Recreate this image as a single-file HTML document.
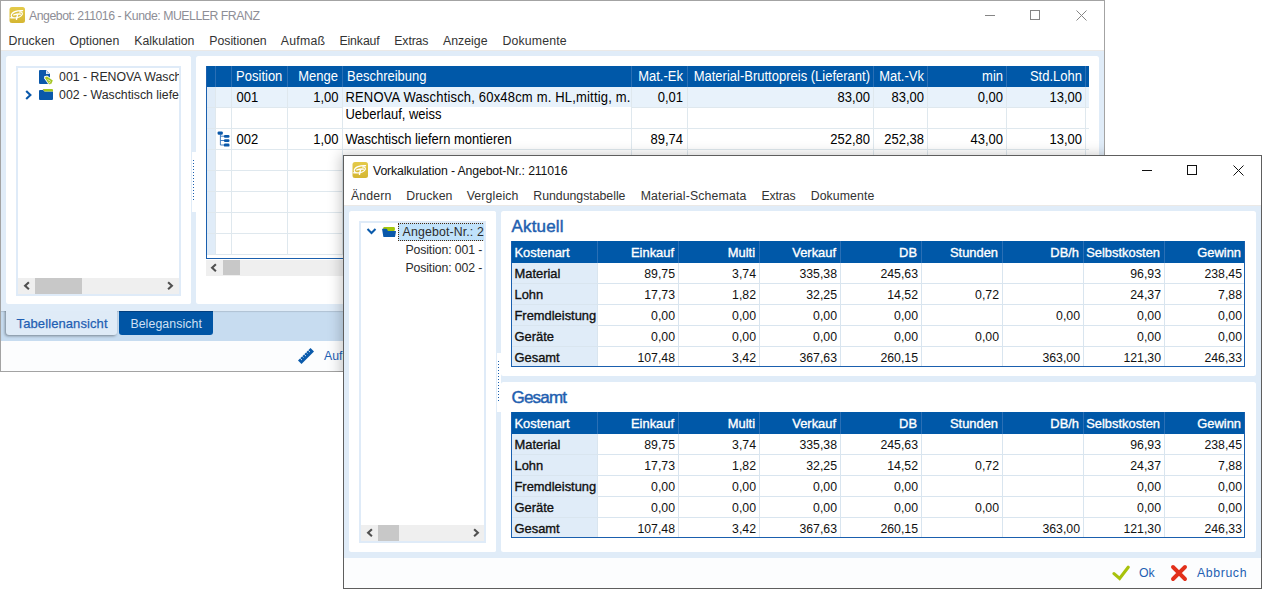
<!DOCTYPE html><html><head><meta charset="utf-8"><style>
html,body{margin:0;padding:0;}
body{width:1262px;height:589px;position:relative;overflow:hidden;background:#fff;font-family:"Liberation Sans",sans-serif;}
.t{position:absolute;white-space:nowrap;}
.b{position:absolute;box-sizing:border-box;}
svg{position:absolute;}
</style></head><body>
<div class="b" style="left:0px;top:0px;width:1105px;height:372px;border:1px solid #a3a3a3;background:#fff;"></div>
<svg style="left:9.4px;top:6.8px" width="16" height="16" viewBox="0 0 16 16"><defs><linearGradient id="gi" x1="0" y1="0" x2="0" y2="1"><stop offset="0" stop-color="#e4ca4a"/><stop offset="1" stop-color="#d5b632"/></linearGradient></defs><rect x="0.5" y="0" width="15.5" height="16" rx="2.5" fill="url(#gi)"/><path d="M13.6 3.6C8 3.3 2.6 5 2.2 8.3C1.9 10.5 5 11.3 8 10.7C11.5 10 13.8 8 13.3 6.1C13 5.2 12 4.9 10.8 5.1M1.2 10.8C2.5 11 3.8 11 5 10.9" stroke="#fff" stroke-width="1.15" fill="none" stroke-linecap="round"/><path d="M4.9 7.9C7 7.2 9.4 7 11.4 7.1M8.6 7.4L7.5 12.3" stroke="#fff" stroke-width="1.45" fill="none" stroke-linecap="round"/></svg>
<div class="t" style="left:29px;top:9.37px;font-size:12.3px;line-height:14.14px;color:#8e8e96;letter-spacing:-0.478px;">Angebot: 211016 - Kunde: MUELLER FRANZ</div>
<div class="b" style="left:985px;top:15px;width:10px;height:1px;background:#858585;"></div>
<div class="b" style="left:1030px;top:10px;width:10px;height:10px;border:1px solid #858585;"></div>
<svg style="left:1076px;top:10px" width="11" height="11" viewBox="0 0 11 11"><path d="M0.5 0.5L10.5 10.5M10.5 0.5L0.5 10.5" stroke="#858585" stroke-width="1"/></svg>
<div class="t" style="left:8.6px;top:33.97px;font-size:12.3px;line-height:14.14px;color:#333;letter-spacing:0.048px;">Drucken</div>
<div class="t" style="left:69.4px;top:33.97px;font-size:12.3px;line-height:14.14px;color:#333;letter-spacing:-0.005px;">Optionen</div>
<div class="t" style="left:134.3px;top:33.97px;font-size:12.3px;line-height:14.14px;color:#333;letter-spacing:-0.010px;">Kalkulation</div>
<div class="t" style="left:209.2px;top:33.97px;font-size:12.3px;line-height:14.14px;color:#333;letter-spacing:0.003px;">Positionen</div>
<div class="t" style="left:280.7px;top:33.97px;font-size:12.3px;line-height:14.14px;color:#333;letter-spacing:0.264px;">Aufmaß</div>
<div class="t" style="left:339.4px;top:33.97px;font-size:12.3px;line-height:14.14px;color:#333;letter-spacing:-0.108px;">Einkauf</div>
<div class="t" style="left:394.3px;top:33.97px;font-size:12.3px;line-height:14.14px;color:#333;letter-spacing:-0.135px;">Extras</div>
<div class="t" style="left:443px;top:33.97px;font-size:12.3px;line-height:14.14px;color:#333;letter-spacing:0.005px;">Anzeige</div>
<div class="t" style="left:502.5px;top:33.97px;font-size:12.3px;line-height:14.14px;color:#333;letter-spacing:0.147px;">Dokumente</div>
<div class="b" style="left:1px;top:50px;width:1103px;height:261px;background:#e0ecf8;"></div>
<div class="b" style="left:1px;top:50px;width:1103px;height:1px;background:#ebe9e7;"></div>
<div class="b" style="left:6px;top:56px;width:185px;height:248px;background:#fff;border-radius:2.5px;"></div>
<div class="b" style="left:16px;top:66px;width:165px;height:230px;border:2px solid #dfebf8;background:#fff;"></div>
<svg style="left:39px;top:70px" width="15" height="15" viewBox="0 0 15 15"><path d="M1 0H7L11 4V13.5Q11 14 10.5 14H1Q0 14 0 13V1Q0 0 1 0Z" fill="#0a58aa"/><path d="M7 0.3L10.7 4H7.5Q7 4 7 3.5Z" fill="#fff"/><path d="M7.6 0.9L10 3.4H7.6Z" fill="#a9c8ea"/><path d="M5.2 6.2L8.2 5.6L14.6 10.2L12.8 14.6L9.8 15L5.2 8.4Z" fill="#fff"/><path d="M6.3 6.9L8 6.6L13.8 10.6L12.2 13.9L10 14.2L6.3 8.3Z" fill="#a4c520"/><path d="M8.5 9.5L11.8 11.4M9.6 12.2L11.4 13.1" stroke="#fff" stroke-width="0.7"/></svg>
<div class="t" style="left:59.1px;top:70.07px;font-size:12.3px;line-height:14.14px;color:#2b2b2b;clip-path:inset(0 0 0 0);">001 - RENOVA Waschtisch liefern</div>
<svg style="left:25px;top:90px" width="8" height="10" viewBox="0 0 8 10"><path d="M1.2 0.9L5.4 5L1.2 9.1" stroke="#0a58aa" stroke-width="2.1" fill="none"/></svg>
<svg style="left:39px;top:89px" width="14" height="11" viewBox="0 0 14 11"><path d="M1 1H4.2L5.6 2.6H14V10Q14 11 13 11H1Q0 11 0 10V2Q0 1 1 1Z" fill="#0a58aa"/><path d="M3.6 0H13Q14 0 14 1V2.6H5.4Z" fill="#a4c520"/></svg>
<div class="t" style="left:59.1px;top:87.97px;font-size:12.3px;line-height:14.14px;color:#2b2b2b;">002 - Waschtisch liefern montieren</div>
<div class="b" style="left:179px;top:66px;width:2px;height:230px;background:#dfebf8;"></div>
<div class="b" style="left:181px;top:56px;width:10px;height:248px;background:#fff;border-radius:0 2.5px 2.5px 0;"></div>
<div class="b" style="left:191px;top:51px;width:5px;height:260px;background:#e0ecf8;"></div>
<div class="b" style="left:18px;top:278px;width:161px;height:16px;background:#efefef;"></div>
<div class="b" style="left:35px;top:278px;width:47px;height:16px;background:#c8c8c8;"></div>
<svg style="left:22px;top:281px" width="9" height="10" viewBox="0 0 9 10"><path d="M6.9 1.2L3.1 4.7L6.9 8.2" stroke="#505050" stroke-width="2.1" fill="none"/></svg>
<svg style="left:166px;top:281px" width="9" height="10" viewBox="0 0 9 10"><path d="M2.1 1.2L5.9 4.7L2.1 8.2" stroke="#505050" stroke-width="2.1" fill="none"/></svg>
<div class="b" style="left:192px;top:152px;width:4px;height:60px;background:#fff;"></div>
<div class="b" style="left:193px;top:160px;width:1px;height:41px;background:repeating-linear-gradient(to bottom,#1a5fae 0,#1a5fae 1px,transparent 1px,transparent 3px);"></div>
<div class="b" style="left:196px;top:56px;width:903px;height:248px;background:#fff;border-radius:2.5px;"></div>
<div class="b" style="left:206px;top:66px;width:883px;height:21px;background:#0058a8;"></div>
<div class="b" style="left:215px;top:66px;width:1px;height:21px;background:#2a6fb5;"></div>
<div class="b" style="left:231px;top:66px;width:1px;height:21px;background:#2a6fb5;"></div>
<div class="b" style="left:287px;top:66px;width:1px;height:21px;background:#2a6fb5;"></div>
<div class="b" style="left:342px;top:66px;width:1px;height:21px;background:#2a6fb5;"></div>
<div class="b" style="left:631px;top:66px;width:1px;height:21px;background:#2a6fb5;"></div>
<div class="b" style="left:687px;top:66px;width:1px;height:21px;background:#2a6fb5;"></div>
<div class="b" style="left:873px;top:66px;width:1px;height:21px;background:#2a6fb5;"></div>
<div class="b" style="left:927px;top:66px;width:1px;height:21px;background:#2a6fb5;"></div>
<div class="b" style="left:1006px;top:66px;width:1px;height:21px;background:#2a6fb5;"></div>
<div class="b" style="left:1085px;top:66px;width:1px;height:21px;background:#2a6fb5;"></div>
<div class="b" style="left:206px;top:87px;width:9px;height:167px;background:#e0ecf8;"></div>
<div class="b" style="left:215px;top:87px;width:874px;height:20px;background:#e8f2fb;"></div>
<div class="b" style="left:206px;top:107px;width:883px;height:1px;background:#dfe8ee;"></div>
<div class="b" style="left:206px;top:128px;width:883px;height:1px;background:#dfe8ee;"></div>
<div class="b" style="left:206px;top:149px;width:883px;height:1px;background:#dfe8ee;"></div>
<div class="b" style="left:206px;top:170px;width:883px;height:1px;background:#dfe8ee;"></div>
<div class="b" style="left:206px;top:191px;width:883px;height:1px;background:#dfe8ee;"></div>
<div class="b" style="left:206px;top:212px;width:883px;height:1px;background:#dfe8ee;"></div>
<div class="b" style="left:206px;top:233px;width:883px;height:1px;background:#dfe8ee;"></div>
<div class="b" style="left:206px;top:254px;width:883px;height:1px;background:#dfe8ee;"></div>
<div class="b" style="left:343px;top:107px;width:288px;height:1px;background:#fff;"></div>
<div class="b" style="left:343px;top:87px;width:288px;height:20px;background:#e8f2fb;"></div>
<div class="b" style="left:215px;top:87px;width:1px;height:167px;background:#dfe8ee;"></div>
<div class="b" style="left:231px;top:87px;width:1px;height:167px;background:#dfe8ee;"></div>
<div class="b" style="left:287px;top:87px;width:1px;height:167px;background:#dfe8ee;"></div>
<div class="b" style="left:342px;top:87px;width:1px;height:167px;background:#dfe8ee;"></div>
<div class="b" style="left:631px;top:87px;width:1px;height:167px;background:#dfe8ee;"></div>
<div class="b" style="left:687px;top:87px;width:1px;height:167px;background:#dfe8ee;"></div>
<div class="b" style="left:873px;top:87px;width:1px;height:167px;background:#dfe8ee;"></div>
<div class="b" style="left:927px;top:87px;width:1px;height:167px;background:#dfe8ee;"></div>
<div class="b" style="left:1006px;top:87px;width:1px;height:167px;background:#dfe8ee;"></div>
<div class="b" style="left:1085px;top:87px;width:1px;height:167px;background:#dfe8ee;"></div>
<div class="b" style="left:206px;top:66px;width:1px;height:193px;background:#1a5fae;"></div>
<div class="b" style="left:206px;top:258px;width:883px;height:1px;background:#1a5fae;"></div>
<div class="t" style="left:236.1px;top:68.72px;font-size:13px;line-height:14.95px;color:#ffffff;transform:scaleY(1.1);transform-origin:0 2.67px;">Position</div>
<div class="t" style="right:924px;top:68.72px;font-size:13px;line-height:14.95px;color:#ffffff;transform:scaleY(1.1);transform-origin:0 2.67px;">Menge</div>
<div class="t" style="left:347px;top:68.72px;font-size:13px;line-height:14.95px;color:#ffffff;transform:scaleY(1.1);transform-origin:0 2.67px;">Beschreibung</div>
<div class="t" style="right:579px;top:68.72px;font-size:13px;line-height:14.95px;color:#ffffff;transform:scaleY(1.1);transform-origin:0 2.67px;">Mat.-Ek</div>
<div class="t" style="right:392px;top:68.72px;font-size:13px;line-height:14.95px;color:#ffffff;transform:scaleY(1.1);transform-origin:0 2.67px;">Material-Bruttopreis (Lieferant)</div>
<div class="t" style="right:338px;top:68.72px;font-size:13px;line-height:14.95px;color:#ffffff;transform:scaleY(1.1);transform-origin:0 2.67px;">Mat.-Vk</div>
<div class="t" style="right:259px;top:68.72px;font-size:13px;line-height:14.95px;color:#ffffff;transform:scaleY(1.1);transform-origin:0 2.67px;">min</div>
<div class="t" style="right:180px;top:68.72px;font-size:13px;line-height:14.95px;color:#ffffff;transform:scaleY(1.1);transform-origin:0 2.67px;">Std.Lohn</div>
<div class="t" style="left:236.5px;top:90.42px;font-size:13px;line-height:14.95px;color:#000;transform:scaleY(1.1);transform-origin:0 2.67px;">001</div>
<div class="t" style="right:923.5px;top:90.42px;font-size:13px;line-height:14.95px;color:#000;transform:scaleY(1.1);transform-origin:0 2.67px;">1,00</div>
<div class="t" style="left:345.4px;top:90.42px;font-size:13px;line-height:14.95px;color:#000;letter-spacing:0.181px;transform:scaleY(1.1);transform-origin:0 2.67px;">RENOVA Waschtisch, 60x48cm m. HL,mittig, m.</div>
<div class="t" style="left:345.4px;top:106.62px;font-size:13px;line-height:14.95px;color:#000;transform:scaleY(1.1);transform-origin:0 2.67px;">Ueberlauf, weiss</div>
<div class="t" style="right:579px;top:90.42px;font-size:13px;line-height:14.95px;color:#000;transform:scaleY(1.1);transform-origin:0 2.67px;">0,01</div>
<div class="t" style="right:392px;top:90.42px;font-size:13px;line-height:14.95px;color:#000;transform:scaleY(1.1);transform-origin:0 2.67px;">83,00</div>
<div class="t" style="right:338px;top:90.42px;font-size:13px;line-height:14.95px;color:#000;transform:scaleY(1.1);transform-origin:0 2.67px;">83,00</div>
<div class="t" style="right:259px;top:90.42px;font-size:13px;line-height:14.95px;color:#000;transform:scaleY(1.1);transform-origin:0 2.67px;">0,00</div>
<div class="t" style="right:180px;top:90.42px;font-size:13px;line-height:14.95px;color:#000;transform:scaleY(1.1);transform-origin:0 2.67px;">13,00</div>
<div class="t" style="left:236.5px;top:132.42px;font-size:13px;line-height:14.95px;color:#000;transform:scaleY(1.1);transform-origin:0 2.67px;">002</div>
<div class="t" style="right:923.5px;top:132.42px;font-size:13px;line-height:14.95px;color:#000;transform:scaleY(1.1);transform-origin:0 2.67px;">1,00</div>
<div class="t" style="left:345.4px;top:132.42px;font-size:13px;line-height:14.95px;color:#000;transform:scaleY(1.1);transform-origin:0 2.67px;">Waschtisch liefern montieren</div>
<div class="t" style="right:579px;top:132.42px;font-size:13px;line-height:14.95px;color:#000;transform:scaleY(1.1);transform-origin:0 2.67px;">89,74</div>
<div class="t" style="right:392px;top:132.42px;font-size:13px;line-height:14.95px;color:#000;transform:scaleY(1.1);transform-origin:0 2.67px;">252,80</div>
<div class="t" style="right:338px;top:132.42px;font-size:13px;line-height:14.95px;color:#000;transform:scaleY(1.1);transform-origin:0 2.67px;">252,38</div>
<div class="t" style="right:259px;top:132.42px;font-size:13px;line-height:14.95px;color:#000;transform:scaleY(1.1);transform-origin:0 2.67px;">43,00</div>
<div class="t" style="right:180px;top:132.42px;font-size:13px;line-height:14.95px;color:#000;transform:scaleY(1.1);transform-origin:0 2.67px;">13,00</div>
<svg style="left:217px;top:131px" width="14" height="17" viewBox="0 0 14 17"><path d="M3.4 3.5V14M3.4 5.2H7M3.4 9.5H7M3.4 14H7" stroke="#2f6fb8" stroke-width="0.9" fill="none"/><rect x="0.6" y="0.4" width="5.2" height="3.3" rx="1.2" fill="#0a58aa"/><rect x="6.9" y="3.9" width="5.6" height="2.8" rx="1.2" fill="#0a58aa"/><rect x="6.9" y="8.2" width="5.6" height="2.8" rx="1.2" fill="#0a58aa"/><rect x="6.9" y="12.6" width="5.6" height="3" rx="1.2" fill="#0a58aa"/></svg>
<div class="b" style="left:206px;top:260px;width:200px;height:16px;background:#efefef;"></div>
<div class="b" style="left:223px;top:260px;width:17px;height:15px;background:#c8c8c8;"></div>
<svg style="left:209px;top:262.5px" width="9" height="10" viewBox="0 0 9 10"><path d="M6.9 1.2L3.1 4.7L6.9 8.2" stroke="#505050" stroke-width="2.1" fill="none"/></svg>
<div class="b" style="left:1px;top:311px;width:1103px;height:30px;overflow:hidden;background:#c7dcf0;box-shadow:inset 0 1px 1px rgba(0,0,0,0.12);">
<div class="b" style="left:5px;top:-3px;width:111px;height:27px;background:#dfebf7;border-radius:0 0 3px 3px;box-shadow:-1px 1px 3px rgba(0,0,0,0.4);"></div>
</div>
<div class="t" style="left:16.6px;top:316.82px;font-size:13px;line-height:14.95px;color:#1f5fb3;letter-spacing:0.096px;-webkit-text-stroke:0.25px #1f5fb3;">Tabellenansicht</div>
<div class="b" style="left:119px;top:311px;width:94px;height:24px;background:#0055a5;border-radius:0 0 3px 3px;box-shadow:inset 0 1px 0 #003f80;"></div>
<div class="t" style="left:130.4px;top:317.17px;font-size:12.3px;line-height:14.14px;color:#cfe0f4;letter-spacing:0.094px;">Belegansicht</div>
<div class="b" style="left:1px;top:341px;width:1103px;height:30px;background:#fcfdfe;"></div>
<svg style="left:297px;top:347px" width="18" height="18" viewBox="0 0 18 18"><path d="M1 13.5L13.5 1L17 4.5L4.5 17Z" fill="#0a5aab"/><path d="M3.2 11.3l1.8 1.8M5.2 9.3l1.2 1.2M7.2 7.3l1.8 1.8M9.2 5.3l1.2 1.2M11.2 3.3l1.8 1.8" stroke="#fff" stroke-width="0.8"/></svg>
<div class="t" style="left:324px;top:349.17px;font-size:12.3px;line-height:14.14px;color:#1f5fb3;">Aufmaß</div>
<div class="b" style="left:0;top:0;width:1105px;height:372px;overflow:hidden;">
<div class="b" style="left:343px;top:155px;width:919px;height:434px;box-shadow:-3px -1px 12px rgba(0,0,0,0.2);"></div>
</div>
<div class="b" style="left:343px;top:155px;width:919px;height:434px;border:1px solid #5e5e5e;background:#fff;"></div>
<svg style="left:352px;top:162px" width="16" height="16" viewBox="0 0 16 16"><rect x="0.5" y="0" width="15.5" height="16" rx="2.5" fill="url(#gi)"/><path d="M13.6 3.6C8 3.3 2.6 5 2.2 8.3C1.9 10.5 5 11.3 8 10.7C11.5 10 13.8 8 13.3 6.1C13 5.2 12 4.9 10.8 5.1M1.2 10.8C2.5 11 3.8 11 5 10.9" stroke="#fff" stroke-width="1.15" fill="none" stroke-linecap="round"/><path d="M4.9 7.9C7 7.2 9.4 7 11.4 7.1M8.6 7.4L7.5 12.3" stroke="#fff" stroke-width="1.45" fill="none" stroke-linecap="round"/></svg>
<div class="t" style="left:373px;top:163.67px;font-size:12.3px;line-height:14.14px;color:#111;letter-spacing:-0.138px;">Vorkalkulation - Angebot-Nr.: 211016</div>
<div class="b" style="left:1142px;top:170px;width:10px;height:1px;background:#111;"></div>
<div class="b" style="left:1187px;top:165px;width:10px;height:10px;border:1px solid #111;"></div>
<svg style="left:1233px;top:165px" width="11" height="11" viewBox="0 0 11 11"><path d="M0.5 0.5L10.5 10.5M10.5 0.5L0.5 10.5" stroke="#111" stroke-width="1"/></svg>
<div class="t" style="left:350.9px;top:188.67px;font-size:12.3px;line-height:14.14px;color:#333;letter-spacing:0.166px;">Ändern</div>
<div class="t" style="left:406.3px;top:188.67px;font-size:12.3px;line-height:14.14px;color:#333;letter-spacing:0.048px;">Drucken</div>
<div class="t" style="left:466.7px;top:188.67px;font-size:12.3px;line-height:14.14px;color:#333;letter-spacing:0.147px;">Vergleich</div>
<div class="t" style="left:533.3px;top:188.67px;font-size:12.3px;line-height:14.14px;color:#333;letter-spacing:-0.011px;">Rundungstabelle</div>
<div class="t" style="left:640.7px;top:188.67px;font-size:12.3px;line-height:14.14px;color:#333;letter-spacing:0.158px;">Material-Schemata</div>
<div class="t" style="left:761.4px;top:188.67px;font-size:12.3px;line-height:14.14px;color:#333;letter-spacing:-0.115px;">Extras</div>
<div class="t" style="left:810.7px;top:188.67px;font-size:12.3px;line-height:14.14px;color:#333;letter-spacing:0.097px;">Dokumente</div>
<div class="b" style="left:344px;top:205px;width:917px;height:353px;background:#e0ecf8;"></div>
<div class="b" style="left:344px;top:205px;width:917px;height:1px;background:#ebe9e7;"></div>
<div class="b" style="left:349px;top:211px;width:147px;height:341px;background:#fff;border-radius:2.5px;"></div>
<div class="b" style="left:359px;top:221px;width:127px;height:322px;border:2px solid #dfebf8;background:#fff;"></div>
<svg style="left:366px;top:227px" width="11" height="9" viewBox="0 0 11 9"><path d="M1.5 2L5.5 6L9.5 2" stroke="#0a5aab" stroke-width="2" fill="none"/></svg>
<svg style="left:382px;top:226px" width="15" height="12" viewBox="0 0 15 12"><rect x="1.2" y="1" width="11.7" height="4" rx="1.2" fill="#a4c80a"/><path d="M0.6 2.7H4.2Q4.8 2.7 5.1 3.3L5.9 5H13.6Q14.1 5 14 5.5L13.1 10.4Q12.9 11 12.3 11H2.1Q1.5 11 1.3 10.4L0.1 3.3Q0 2.7 0.6 2.7Z" fill="#0a58aa"/></svg>
<div class="b" style="left:398px;top:223px;width:87px;height:18px;background:#c0e2fb;border:1px dotted #4a2a10;"></div>
<div class="t" style="left:402.6px;top:224.67px;font-size:12.3px;line-height:14.14px;color:#2b2b2b;letter-spacing:0.150px;">Angebot-Nr.: 2</div>
<div class="t" style="left:405.4px;top:242.87px;font-size:12.3px;line-height:14.14px;color:#2b2b2b;letter-spacing:-0.120px;">Position: 001 - RENOVA</div>
<div class="t" style="left:405.4px;top:261.27px;font-size:12.3px;line-height:14.14px;color:#2b2b2b;letter-spacing:-0.120px;">Position: 002 - Waschtisch</div>
<div class="b" style="left:484px;top:221px;width:2px;height:322px;background:#dfebf8;"></div>
<div class="b" style="left:486px;top:211px;width:10px;height:341px;background:#fff;border-radius:0 2.5px 2.5px 0;"></div>
<div class="b" style="left:496px;top:206px;width:5px;height:352px;background:#e0ecf8;"></div>
<div class="b" style="left:361px;top:525px;width:123px;height:16px;background:#efefef;"></div>
<div class="b" style="left:378px;top:525px;width:21px;height:16px;background:#c8c8c8;"></div>
<svg style="left:365px;top:528px" width="9" height="10" viewBox="0 0 9 10"><path d="M6.9 1.2L3.1 4.7L6.9 8.2" stroke="#505050" stroke-width="2.1" fill="none"/></svg>
<svg style="left:472px;top:528px" width="9" height="10" viewBox="0 0 9 10"><path d="M2.1 1.2L5.9 4.7L2.1 8.2" stroke="#505050" stroke-width="2.1" fill="none"/></svg>
<div class="b" style="left:497px;top:353px;width:4px;height:59px;background:#fff;"></div>
<div class="b" style="left:498px;top:361px;width:1px;height:41px;background:repeating-linear-gradient(to bottom,#1a5fae 0,#1a5fae 1px,transparent 1px,transparent 3px);"></div>
<div class="b" style="left:501px;top:211px;width:755px;height:165px;background:#fff;border-radius:2.5px;"></div>
<div class="t" style="left:511.5px;top:217.33px;font-size:17px;line-height:19.55px;color:#1f5fb0;letter-spacing:0.161px;-webkit-text-stroke:0.45px #1f5fb0;">Aktuell</div>
<div class="b" style="left:511px;top:241px;width:734px;height:22px;background:#0058a8;"></div>
<div class="b" style="left:597px;top:241px;width:1px;height:22px;background:#2a6fb5;"></div>
<div class="b" style="left:678px;top:241px;width:1px;height:22px;background:#2a6fb5;"></div>
<div class="b" style="left:759px;top:241px;width:1px;height:22px;background:#2a6fb5;"></div>
<div class="b" style="left:840px;top:241px;width:1px;height:22px;background:#2a6fb5;"></div>
<div class="b" style="left:921px;top:241px;width:1px;height:22px;background:#2a6fb5;"></div>
<div class="b" style="left:1002px;top:241px;width:1px;height:22px;background:#2a6fb5;"></div>
<div class="b" style="left:1083px;top:241px;width:1px;height:22px;background:#2a6fb5;"></div>
<div class="b" style="left:1164px;top:241px;width:1px;height:22px;background:#2a6fb5;"></div>
<div class="t" style="left:514.5px;top:245.62px;font-size:12.9px;line-height:14.83px;color:#fff;-webkit-text-stroke:0.35px #fff;">Kostenart</div>
<div class="t" style="right:588px;top:245.62px;font-size:12.9px;line-height:14.83px;color:#fff;-webkit-text-stroke:0.35px #fff;">Einkauf</div>
<div class="t" style="right:507px;top:245.62px;font-size:12.9px;line-height:14.83px;color:#fff;-webkit-text-stroke:0.35px #fff;">Multi</div>
<div class="t" style="right:426px;top:245.62px;font-size:12.9px;line-height:14.83px;color:#fff;-webkit-text-stroke:0.35px #fff;">Verkauf</div>
<div class="t" style="right:345px;top:245.62px;font-size:12.9px;line-height:14.83px;color:#fff;-webkit-text-stroke:0.35px #fff;">DB</div>
<div class="t" style="right:264px;top:245.62px;font-size:12.9px;line-height:14.83px;color:#fff;-webkit-text-stroke:0.35px #fff;">Stunden</div>
<div class="t" style="right:183px;top:245.62px;font-size:12.9px;line-height:14.83px;color:#fff;-webkit-text-stroke:0.35px #fff;">DB/h</div>
<div class="t" style="right:102px;top:245.62px;font-size:12.9px;line-height:14.83px;color:#fff;-webkit-text-stroke:0.35px #fff;">Selbstkosten</div>
<div class="t" style="right:21px;top:245.62px;font-size:12.9px;line-height:14.83px;color:#fff;-webkit-text-stroke:0.35px #fff;">Gewinn</div>
<div class="b" style="left:511px;top:263px;width:86px;height:103px;background:#e0ecf8;"></div>
<div class="b" style="left:511px;top:283px;width:734px;height:1px;background:#d9e5ef;"></div>
<div class="b" style="left:511px;top:304px;width:734px;height:1px;background:#d9e5ef;"></div>
<div class="b" style="left:511px;top:325px;width:734px;height:1px;background:#d9e5ef;"></div>
<div class="b" style="left:511px;top:346px;width:734px;height:1px;background:#d9e5ef;"></div>
<div class="b" style="left:597px;top:263px;width:1px;height:103px;background:#d9e5ef;"></div>
<div class="b" style="left:678px;top:263px;width:1px;height:103px;background:#d9e5ef;"></div>
<div class="b" style="left:759px;top:263px;width:1px;height:103px;background:#d9e5ef;"></div>
<div class="b" style="left:840px;top:263px;width:1px;height:103px;background:#d9e5ef;"></div>
<div class="b" style="left:921px;top:263px;width:1px;height:103px;background:#d9e5ef;"></div>
<div class="b" style="left:1002px;top:263px;width:1px;height:103px;background:#d9e5ef;"></div>
<div class="b" style="left:1083px;top:263px;width:1px;height:103px;background:#d9e5ef;"></div>
<div class="b" style="left:1164px;top:263px;width:1px;height:103px;background:#d9e5ef;"></div>
<div class="b" style="left:511px;top:241px;width:1px;height:126px;background:#1a5fae;"></div>
<div class="b" style="left:1244px;top:241px;width:1px;height:126px;background:#1a5fae;"></div>
<div class="b" style="left:511px;top:366px;width:734px;height:1px;background:#1a5fae;"></div>
<div class="t" style="left:514.5px;top:266.62px;font-size:12.9px;line-height:14.83px;color:#111;-webkit-text-stroke:0.35px #111;">Material</div>
<div class="t" style="right:587px;top:267.17px;font-size:12.3px;line-height:14.14px;color:#111;">89,75</div>
<div class="t" style="right:506px;top:267.17px;font-size:12.3px;line-height:14.14px;color:#111;">3,74</div>
<div class="t" style="right:425px;top:267.17px;font-size:12.3px;line-height:14.14px;color:#111;">335,38</div>
<div class="t" style="right:344px;top:267.17px;font-size:12.3px;line-height:14.14px;color:#111;">245,63</div>
<div class="t" style="right:101px;top:267.17px;font-size:12.3px;line-height:14.14px;color:#111;">96,93</div>
<div class="t" style="right:20px;top:267.17px;font-size:12.3px;line-height:14.14px;color:#111;">238,45</div>
<div class="t" style="left:514.5px;top:287.62px;font-size:12.9px;line-height:14.83px;color:#111;-webkit-text-stroke:0.35px #111;">Lohn</div>
<div class="t" style="right:587px;top:288.17px;font-size:12.3px;line-height:14.14px;color:#111;">17,73</div>
<div class="t" style="right:506px;top:288.17px;font-size:12.3px;line-height:14.14px;color:#111;">1,82</div>
<div class="t" style="right:425px;top:288.17px;font-size:12.3px;line-height:14.14px;color:#111;">32,25</div>
<div class="t" style="right:344px;top:288.17px;font-size:12.3px;line-height:14.14px;color:#111;">14,52</div>
<div class="t" style="right:263px;top:288.17px;font-size:12.3px;line-height:14.14px;color:#111;">0,72</div>
<div class="t" style="right:101px;top:288.17px;font-size:12.3px;line-height:14.14px;color:#111;">24,37</div>
<div class="t" style="right:20px;top:288.17px;font-size:12.3px;line-height:14.14px;color:#111;">7,88</div>
<div class="t" style="left:514.5px;top:308.62px;font-size:12.9px;line-height:14.83px;color:#111;-webkit-text-stroke:0.35px #111;">Fremdleistung</div>
<div class="t" style="right:587px;top:309.17px;font-size:12.3px;line-height:14.14px;color:#111;">0,00</div>
<div class="t" style="right:506px;top:309.17px;font-size:12.3px;line-height:14.14px;color:#111;">0,00</div>
<div class="t" style="right:425px;top:309.17px;font-size:12.3px;line-height:14.14px;color:#111;">0,00</div>
<div class="t" style="right:344px;top:309.17px;font-size:12.3px;line-height:14.14px;color:#111;">0,00</div>
<div class="t" style="right:182px;top:309.17px;font-size:12.3px;line-height:14.14px;color:#111;">0,00</div>
<div class="t" style="right:101px;top:309.17px;font-size:12.3px;line-height:14.14px;color:#111;">0,00</div>
<div class="t" style="right:20px;top:309.17px;font-size:12.3px;line-height:14.14px;color:#111;">0,00</div>
<div class="t" style="left:514.5px;top:329.62px;font-size:12.9px;line-height:14.83px;color:#111;-webkit-text-stroke:0.35px #111;">Geräte</div>
<div class="t" style="right:587px;top:330.17px;font-size:12.3px;line-height:14.14px;color:#111;">0,00</div>
<div class="t" style="right:506px;top:330.17px;font-size:12.3px;line-height:14.14px;color:#111;">0,00</div>
<div class="t" style="right:425px;top:330.17px;font-size:12.3px;line-height:14.14px;color:#111;">0,00</div>
<div class="t" style="right:344px;top:330.17px;font-size:12.3px;line-height:14.14px;color:#111;">0,00</div>
<div class="t" style="right:263px;top:330.17px;font-size:12.3px;line-height:14.14px;color:#111;">0,00</div>
<div class="t" style="right:101px;top:330.17px;font-size:12.3px;line-height:14.14px;color:#111;">0,00</div>
<div class="t" style="right:20px;top:330.17px;font-size:12.3px;line-height:14.14px;color:#111;">0,00</div>
<div class="t" style="left:514.5px;top:350.62px;font-size:12.9px;line-height:14.83px;color:#111;-webkit-text-stroke:0.35px #111;">Gesamt</div>
<div class="t" style="right:587px;top:351.17px;font-size:12.3px;line-height:14.14px;color:#111;">107,48</div>
<div class="t" style="right:506px;top:351.17px;font-size:12.3px;line-height:14.14px;color:#111;">3,42</div>
<div class="t" style="right:425px;top:351.17px;font-size:12.3px;line-height:14.14px;color:#111;">367,63</div>
<div class="t" style="right:344px;top:351.17px;font-size:12.3px;line-height:14.14px;color:#111;">260,15</div>
<div class="t" style="right:182px;top:351.17px;font-size:12.3px;line-height:14.14px;color:#111;">363,00</div>
<div class="t" style="right:101px;top:351.17px;font-size:12.3px;line-height:14.14px;color:#111;">121,30</div>
<div class="t" style="right:20px;top:351.17px;font-size:12.3px;line-height:14.14px;color:#111;">246,33</div>
<div class="b" style="left:501px;top:382px;width:755px;height:170px;background:#fff;border-radius:2.5px;"></div>
<div class="t" style="left:511.5px;top:388.33px;font-size:17px;line-height:19.55px;color:#1f5fb0;letter-spacing:-0.800px;-webkit-text-stroke:0.45px #1f5fb0;">Gesamt</div>
<div class="b" style="left:511px;top:412px;width:734px;height:22px;background:#0058a8;"></div>
<div class="b" style="left:597px;top:412px;width:1px;height:22px;background:#2a6fb5;"></div>
<div class="b" style="left:678px;top:412px;width:1px;height:22px;background:#2a6fb5;"></div>
<div class="b" style="left:759px;top:412px;width:1px;height:22px;background:#2a6fb5;"></div>
<div class="b" style="left:840px;top:412px;width:1px;height:22px;background:#2a6fb5;"></div>
<div class="b" style="left:921px;top:412px;width:1px;height:22px;background:#2a6fb5;"></div>
<div class="b" style="left:1002px;top:412px;width:1px;height:22px;background:#2a6fb5;"></div>
<div class="b" style="left:1083px;top:412px;width:1px;height:22px;background:#2a6fb5;"></div>
<div class="b" style="left:1164px;top:412px;width:1px;height:22px;background:#2a6fb5;"></div>
<div class="t" style="left:514.5px;top:416.62px;font-size:12.9px;line-height:14.83px;color:#fff;-webkit-text-stroke:0.35px #fff;">Kostenart</div>
<div class="t" style="right:588px;top:416.62px;font-size:12.9px;line-height:14.83px;color:#fff;-webkit-text-stroke:0.35px #fff;">Einkauf</div>
<div class="t" style="right:507px;top:416.62px;font-size:12.9px;line-height:14.83px;color:#fff;-webkit-text-stroke:0.35px #fff;">Multi</div>
<div class="t" style="right:426px;top:416.62px;font-size:12.9px;line-height:14.83px;color:#fff;-webkit-text-stroke:0.35px #fff;">Verkauf</div>
<div class="t" style="right:345px;top:416.62px;font-size:12.9px;line-height:14.83px;color:#fff;-webkit-text-stroke:0.35px #fff;">DB</div>
<div class="t" style="right:264px;top:416.62px;font-size:12.9px;line-height:14.83px;color:#fff;-webkit-text-stroke:0.35px #fff;">Stunden</div>
<div class="t" style="right:183px;top:416.62px;font-size:12.9px;line-height:14.83px;color:#fff;-webkit-text-stroke:0.35px #fff;">DB/h</div>
<div class="t" style="right:102px;top:416.62px;font-size:12.9px;line-height:14.83px;color:#fff;-webkit-text-stroke:0.35px #fff;">Selbstkosten</div>
<div class="t" style="right:21px;top:416.62px;font-size:12.9px;line-height:14.83px;color:#fff;-webkit-text-stroke:0.35px #fff;">Gewinn</div>
<div class="b" style="left:511px;top:434px;width:86px;height:103px;background:#e0ecf8;"></div>
<div class="b" style="left:511px;top:454px;width:734px;height:1px;background:#d9e5ef;"></div>
<div class="b" style="left:511px;top:475px;width:734px;height:1px;background:#d9e5ef;"></div>
<div class="b" style="left:511px;top:496px;width:734px;height:1px;background:#d9e5ef;"></div>
<div class="b" style="left:511px;top:517px;width:734px;height:1px;background:#d9e5ef;"></div>
<div class="b" style="left:597px;top:434px;width:1px;height:103px;background:#d9e5ef;"></div>
<div class="b" style="left:678px;top:434px;width:1px;height:103px;background:#d9e5ef;"></div>
<div class="b" style="left:759px;top:434px;width:1px;height:103px;background:#d9e5ef;"></div>
<div class="b" style="left:840px;top:434px;width:1px;height:103px;background:#d9e5ef;"></div>
<div class="b" style="left:921px;top:434px;width:1px;height:103px;background:#d9e5ef;"></div>
<div class="b" style="left:1002px;top:434px;width:1px;height:103px;background:#d9e5ef;"></div>
<div class="b" style="left:1083px;top:434px;width:1px;height:103px;background:#d9e5ef;"></div>
<div class="b" style="left:1164px;top:434px;width:1px;height:103px;background:#d9e5ef;"></div>
<div class="b" style="left:511px;top:412px;width:1px;height:126px;background:#1a5fae;"></div>
<div class="b" style="left:1244px;top:412px;width:1px;height:126px;background:#1a5fae;"></div>
<div class="b" style="left:511px;top:537px;width:734px;height:1px;background:#1a5fae;"></div>
<div class="t" style="left:514.5px;top:437.62px;font-size:12.9px;line-height:14.83px;color:#111;-webkit-text-stroke:0.35px #111;">Material</div>
<div class="t" style="right:587px;top:438.17px;font-size:12.3px;line-height:14.14px;color:#111;">89,75</div>
<div class="t" style="right:506px;top:438.17px;font-size:12.3px;line-height:14.14px;color:#111;">3,74</div>
<div class="t" style="right:425px;top:438.17px;font-size:12.3px;line-height:14.14px;color:#111;">335,38</div>
<div class="t" style="right:344px;top:438.17px;font-size:12.3px;line-height:14.14px;color:#111;">245,63</div>
<div class="t" style="right:101px;top:438.17px;font-size:12.3px;line-height:14.14px;color:#111;">96,93</div>
<div class="t" style="right:20px;top:438.17px;font-size:12.3px;line-height:14.14px;color:#111;">238,45</div>
<div class="t" style="left:514.5px;top:458.62px;font-size:12.9px;line-height:14.83px;color:#111;-webkit-text-stroke:0.35px #111;">Lohn</div>
<div class="t" style="right:587px;top:459.17px;font-size:12.3px;line-height:14.14px;color:#111;">17,73</div>
<div class="t" style="right:506px;top:459.17px;font-size:12.3px;line-height:14.14px;color:#111;">1,82</div>
<div class="t" style="right:425px;top:459.17px;font-size:12.3px;line-height:14.14px;color:#111;">32,25</div>
<div class="t" style="right:344px;top:459.17px;font-size:12.3px;line-height:14.14px;color:#111;">14,52</div>
<div class="t" style="right:263px;top:459.17px;font-size:12.3px;line-height:14.14px;color:#111;">0,72</div>
<div class="t" style="right:101px;top:459.17px;font-size:12.3px;line-height:14.14px;color:#111;">24,37</div>
<div class="t" style="right:20px;top:459.17px;font-size:12.3px;line-height:14.14px;color:#111;">7,88</div>
<div class="t" style="left:514.5px;top:479.62px;font-size:12.9px;line-height:14.83px;color:#111;-webkit-text-stroke:0.35px #111;">Fremdleistung</div>
<div class="t" style="right:587px;top:480.17px;font-size:12.3px;line-height:14.14px;color:#111;">0,00</div>
<div class="t" style="right:506px;top:480.17px;font-size:12.3px;line-height:14.14px;color:#111;">0,00</div>
<div class="t" style="right:425px;top:480.17px;font-size:12.3px;line-height:14.14px;color:#111;">0,00</div>
<div class="t" style="right:344px;top:480.17px;font-size:12.3px;line-height:14.14px;color:#111;">0,00</div>
<div class="t" style="right:101px;top:480.17px;font-size:12.3px;line-height:14.14px;color:#111;">0,00</div>
<div class="t" style="right:20px;top:480.17px;font-size:12.3px;line-height:14.14px;color:#111;">0,00</div>
<div class="t" style="left:514.5px;top:500.62px;font-size:12.9px;line-height:14.83px;color:#111;-webkit-text-stroke:0.35px #111;">Geräte</div>
<div class="t" style="right:587px;top:501.17px;font-size:12.3px;line-height:14.14px;color:#111;">0,00</div>
<div class="t" style="right:506px;top:501.17px;font-size:12.3px;line-height:14.14px;color:#111;">0,00</div>
<div class="t" style="right:425px;top:501.17px;font-size:12.3px;line-height:14.14px;color:#111;">0,00</div>
<div class="t" style="right:344px;top:501.17px;font-size:12.3px;line-height:14.14px;color:#111;">0,00</div>
<div class="t" style="right:263px;top:501.17px;font-size:12.3px;line-height:14.14px;color:#111;">0,00</div>
<div class="t" style="right:101px;top:501.17px;font-size:12.3px;line-height:14.14px;color:#111;">0,00</div>
<div class="t" style="right:20px;top:501.17px;font-size:12.3px;line-height:14.14px;color:#111;">0,00</div>
<div class="t" style="left:514.5px;top:521.62px;font-size:12.9px;line-height:14.83px;color:#111;-webkit-text-stroke:0.35px #111;">Gesamt</div>
<div class="t" style="right:587px;top:522.17px;font-size:12.3px;line-height:14.14px;color:#111;">107,48</div>
<div class="t" style="right:506px;top:522.17px;font-size:12.3px;line-height:14.14px;color:#111;">3,42</div>
<div class="t" style="right:425px;top:522.17px;font-size:12.3px;line-height:14.14px;color:#111;">367,63</div>
<div class="t" style="right:344px;top:522.17px;font-size:12.3px;line-height:14.14px;color:#111;">260,15</div>
<div class="t" style="right:182px;top:522.17px;font-size:12.3px;line-height:14.14px;color:#111;">363,00</div>
<div class="t" style="right:101px;top:522.17px;font-size:12.3px;line-height:14.14px;color:#111;">121,30</div>
<div class="t" style="right:20px;top:522.17px;font-size:12.3px;line-height:14.14px;color:#111;">246,33</div>
<div class="b" style="left:344px;top:558px;width:917px;height:30px;background:#fcfdfe;"></div>
<svg style="left:1112px;top:565px" width="18" height="16" viewBox="0 0 18 16"><path d="M2 8.6L7.6 13.4L16.2 2.2" stroke="#a8c20c" stroke-width="3.1" fill="none" stroke-linecap="round" stroke-linejoin="miter"/></svg>
<div class="t" style="left:1139px;top:565.67px;font-size:12.3px;line-height:14.14px;color:#1f5fb3;">Ok</div>
<svg style="left:1170px;top:564px" width="18" height="18" viewBox="0 0 18 18"><path d="M3 3L15 15M15 3L3 15" stroke="#e2301b" stroke-width="3.9" stroke-linecap="round"/></svg>
<div class="t" style="left:1197px;top:565.67px;font-size:12.3px;line-height:14.14px;color:#1f5fb3;letter-spacing:0.612px;">Abbruch</div>
</body></html>
